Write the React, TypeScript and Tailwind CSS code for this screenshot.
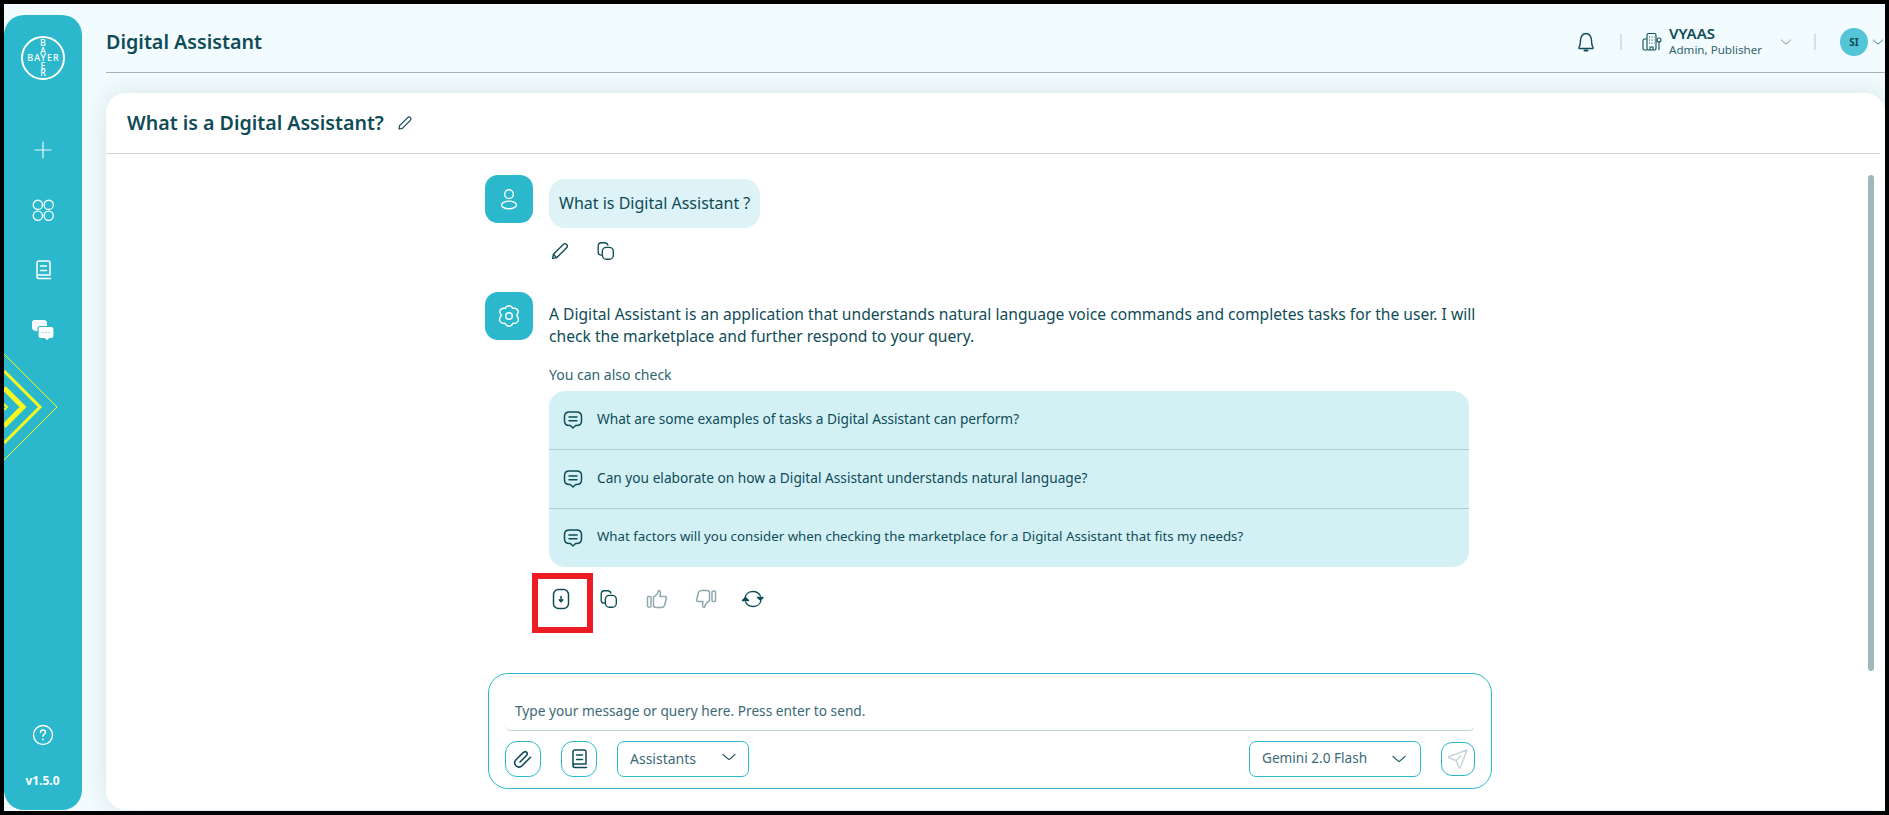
const ink = "#0f4c57";

function Svg({ size = 24, color = ink, sw = 1.5, children }: { size?: number; color?: string; sw?: number; children: React.ReactNode }) {
  return (
    <svg width={size} height={size} viewBox="0 0 24 24" fill="none" stroke={color} strokeWidth={sw} strokeLinecap="round" strokeLinejoin="round" className="shrink-0">
      {children}
    </svg>
  );
}

const CopyIcon = () => (
  <Svg size={22}>
    <path d="M7 16.5C4.8 16.5 3.5 15 3.5 13V6.5C3.5 4.5 5 3 7 3H10.5C12 3 13.5 4 14 5.5" />
    <rect x="8" y="8" width="12" height="13" rx="4.5" />
  </Svg>
);
const BookIcon = ({ color = ink, size = 24 }: { color?: string; size?: number }) => (
  <Svg size={size} color={color}>
    <path d="M6 18.5V5C6 3.9 6.9 3 8 3H17C18.1 3 19 3.9 19 5V17H7.5C6.6 17 6 17.7 6 18.6C6 19.6 6.7 20.5 7.8 20.5H19.5" />
    <path d="M9.5 8H15.5M9.5 12.5H15.5" />
  </Svg>
);
const Chevron = ({ size = 16, color = ink, sw = 1.5 }: { size?: number; color?: string; sw?: number }) => (
  <Svg size={size} color={color} sw={sw}>
    <path d="M4 8.5C7 11.5 10 14 12 15.5C14 14 17 11.5 20 8.5" />
  </Svg>
);
const MsgIcon = () => (
  <Svg size={24}>
    <path d="M8.5 4H15.5C18.5 4 20.5 5.8 20.5 8.5V13C20.5 15.7 18.5 17.5 15.5 17.5H14.6L12 20L9.4 17.5H8.5C5.5 17.5 3.5 15.7 3.5 13V8.5C3.5 5.8 5.5 4 8.5 4Z" />
    <path d="M8 9H16M8 12.8H16" />
  </Svg>
);

function Logo() {
  const letters = "BAYER".split("");
  return (
    <div className="relative w-[44px] h-[44px] rounded-full border-2 border-white text-white font-medium text-[9px] leading-[7.6px]">
      <div className="absolute inset-0 flex items-center justify-center tracking-[1.1px] pl-[1px]">BAYER</div>
      <div className="absolute inset-0 flex flex-col items-center justify-center">
        {letters.map((l, i) => (
          <span key={i} className={i === 2 ? "invisible" : ""}>{l}</span>
        ))}
      </div>
    </div>
  );
}

function Sidebar() {
  return (
    <aside className="relative w-[78px] h-[795px] mt-[11px] bg-[#2bb8cc] rounded-[20px] shrink-0 flex flex-col items-center overflow-hidden text-white">
      <div className="mt-[21px]"><Logo /></div>
      <div className="mt-[58px]">
        <Svg size={24} color="#e8fafc" sw={1.2}><path d="M12 4V20M4 12H20" /></Svg>
      </div>
      <div className="mt-[35px]">
        <Svg size={26} color="#fff" sw={1.2}>
          <rect x="3" y="3" width="8.5" height="8.5" rx="4.2" />
          <rect x="13" y="3" width="8.5" height="8.5" rx="4.2" />
          <rect x="3" y="13" width="8.5" height="8.5" rx="4.2" />
          <rect x="13" y="13" width="8.5" height="8.5" rx="4.2" />
        </Svg>
      </div>
      <div className="mt-[35px]"><BookIcon color="#fff" size={24} /></div>
      <div className="mt-[37px]">
        <svg width="24" height="24" viewBox="0 0 24 24" fill="none">
          <path d="M3 1H13C15 1 16 2.5 16 4V12H6C3 12 1 11 1 8V3.5C1 2 2 1 3 1Z" fill="#fff" />
          <path d="M9 7.5H20.5C22 7.5 23 8.5 23 10V17C23 18.5 22 19.5 20.5 19.5H18.5L16 22L13.5 19.5H9.5C8 19.5 7 18.5 7 17V10C7 8.5 8 7.5 9 7.5Z" fill="#fff" stroke="#2bb8cc" strokeWidth="1.2" />
          <path d="M11.5 13.5H12.5M14.5 13.5H15.5M17.5 13.5H18.5" stroke="#2bb8cc" strokeWidth="1.2" />
        </svg>
      </div>
      <svg className="absolute left-0 top-[339px]" width="54" height="106" viewBox="0 0 54 106" fill="none" stroke="#f8f820">
        <path d="M0 0L53 53L0 106" strokeWidth="1" />
        <path d="M0 17L36 53L0 89" strokeWidth="3" />
        <path d="M0 34L19 53L0 72" strokeWidth="5" />
        <path d="M0 50L3 53L0 56" strokeWidth="2" />
      </svg>
      <div className="mt-auto">
        <Svg size={24} color="#fff" sw={1.4}>
          <circle cx="12" cy="12" r="9.5" />
          <path d="M9.5 9.5C9.5 8 10.6 7 12 7C13.4 7 14.5 8 14.5 9.3C14.5 11 12 11.2 12 13.3" />
          <path d="M12 16.5V16.6" strokeWidth="1.8" />
        </Svg>
      </div>
      <div className="mt-[26px] mb-[21px] text-[12px] leading-[16px] font-bold mr-[1px]">v1.5.0</div>
    </aside>
  );
}

function Header() {
  return (
    <header className="h-[58px] mt-[11px] border-b border-[#aab4b8] flex items-center text-[#0f4c57]">
      <h1 className="text-[19.7px] font-semibold leading-[28px] -mt-[3px]">Digital Assistant</h1>
      <div className="ml-auto flex items-center -mt-[3px]">
        <Svg size={24} sw={1.4}>
          <path d="M5 17.5C6.2 15.5 6.5 14 6.5 10.5C6.5 6.5 8.8 3.5 12 3.5C15.2 3.5 17.5 6.5 17.5 10.5C17.5 14 17.8 15.5 19 17.5C19.2 18 19 18.5 18.5 18.5H5.5C5 18.5 4.8 18 5 17.5Z" />
          <path d="M10.5 20.5H13.5" strokeWidth="2" />
        </Svg>
        <div className="w-[2px] h-[16px] bg-[#dcdfe0] ml-[22px]" />
        <div className="ml-[20px]">
          <svg width="20" height="20" viewBox="0 0 20 20" fill="none" stroke={ink} strokeWidth="1.1">
            <rect x="5" y="1.5" width="9" height="16.5" rx="1.5" />
            <path d="M5 7H2.5C1.7 7 1 7.7 1 8.5V16.5C1 17.3 1.7 18 2.5 18H5" />
            <path d="M7 5H8M9.5 5H10.5M12 5H12.5M7 8H8M9.5 8H10.5M12 8H12.5M7 11H8M9.5 11H10.5M12 11H12.5M8 18V15H11V18" />
            <circle cx="17" cy="8" r="2" />
            <path d="M17 10V18" />
          </svg>
        </div>
        <div className="ml-[7px] w-[110px] -mt-[3px]">
          <div className="text-[15px] leading-[18px] font-semibold">VYAAS</div>
          <div className="text-[11.6px] leading-[16px] text-[#2e6570]">Admin, Publisher</div>
        </div>
        <Chevron size={14} sw={1} />
        <div className="w-[2px] h-[16px] bg-[#dcdfe0] ml-[21px]" />
        <div className="ml-[24px] w-[28px] h-[28px] rounded-full bg-[#54c5d6] flex items-center justify-center text-[10px] font-bold">SI</div>
        <div className="ml-[3px]"><Chevron size={14} sw={1.3} /></div>
      </div>
    </header>
  );
}

function Avatar({ children }: { children: React.ReactNode }) {
  return <div className="w-[48px] h-[48px] rounded-[13px] bg-[#2bb8cc] flex items-center justify-center shrink-0">{children}</div>;
}

const suggestions = [
  { text: "What are some examples of tasks a Digital Assistant can perform?", rowClass: "h-[58px]", textClass: "text-[13.7px]" },
  { text: "Can you elaborate on how a Digital Assistant understands natural language?", rowClass: "h-[59px] border-t border-[#a9cfd4]", textClass: "text-[13.7px]" },
  { text: "What factors will you consider when checking the marketplace for a Digital Assistant that fits my needs?", rowClass: "h-[59px] border-t border-[#a9cfd4]", textClass: "text-[13.3px]" },
];

function Chat() {
  return (
    <div className="relative flex-1 pl-[379px] pt-[21px] text-[#0f4c57]">
      <div className="absolute right-[11px] top-[21px] w-[6px] h-[496px] rounded-full bg-[#9fb8bb]" />
      <div className="flex gap-[16px]">
        <Avatar>
          <Svg size={26} color="#fff" sw={1.3}>
            <circle cx="12" cy="7.5" r="4" />
            <ellipse cx="12" cy="17.5" rx="7" ry="3.5" />
          </Svg>
        </Avatar>
        <div className="mt-[4px] h-[49px] w-[211px] rounded-[16px] bg-[#def3f7] flex items-center pl-[10px] pb-[2px] text-[16px]">What is Digital Assistant ?</div>
      </div>
      <div className="ml-[64px] mt-[11px] flex items-center gap-[24px] h-[24px]">
        <Svg size={22} sw={1.5}>
          <path d="M4 20L4.8 15.5L15.5 4.8C16.5 3.8 18 3.8 19.2 4.8C20.2 5.9 20.2 7.5 19.2 8.5L8.5 19.2Z" />
          <path d="M5 15.8L8.2 19" />
        </Svg>
        <CopyIcon />
      </div>
      <div className="flex gap-[16px] mt-[29px]">
        <Avatar>
          <Svg size={26} color="#fff" sw={1.3}>
            <circle cx="12" cy="12" r="3" />
            <path d="M12 2.5C14 2.5 15 4 15.5 5C17 4.5 19.5 5 20.3 7C21 9 19.7 10.5 19 11.5C19.7 12.5 21.3 14 20.5 16.5C19.7 18.7 17 19 15.7 18.7C15 20 14 21.5 12 21.5C10 21.5 9 20 8.3 18.7C7 19 4.3 18.7 3.5 16.5C2.7 14 4.3 12.5 5 11.5C4.3 10.5 3 9 3.7 7C4.5 5 7 4.5 8.5 5C9 4 10 2.5 12 2.5Z" />
          </Svg>
        </Avatar>
        <div className="w-[930px] text-[15.64px] leading-[22px] pt-[11px]">
          A Digital Assistant is an application that understands natural language voice commands and completes tasks for the user. I will check the marketplace and further respond to your query.
        </div>
      </div>
      <div className="ml-[64px]">
        <div className="mt-[18px] text-[14px] leading-[20px] text-[#2e6570]">You can also check</div>
        <div className="mt-[6px] w-[920px] rounded-[16px] bg-[#d3f1f5]">
          {suggestions.map((s) => (
            <div key={s.text} className={`flex items-center gap-[12px] pl-[12px] ${s.rowClass}`}>
              <MsgIcon />
              <span className={`${s.textClass} pb-[2px]`}>{s.text}</span>
            </div>
          ))}
        </div>
        <div className="flex items-center h-[24px] mt-[20px] gap-[25px]">
          <div className="relative w-[24px] h-[24px]">
            <div className="absolute left-[-17px] top-[-14px] w-[61px] h-[60px] border-[6px] border-[#ed1c24]" />
            <Svg size={24} sw={1.5}>
              <rect x="4.5" y="2.5" width="15" height="19" rx="5" />
              <path d="M12 9.5V14.5M10.2 12.8L12 14.8L13.8 12.8" strokeWidth="1.5" />
            </Svg>
          </div>
          <CopyIcon />
          <Svg size={24} color="#8fa9ad" sw={1.5}>
            <rect x="2.5" y="9.5" width="3.5" height="10.5" rx="1" />
            <path d="M8.5 10C10.5 9 13 6.5 13.5 3.5C15.5 3.5 16 5.5 15 9.5H20C21.5 9.5 21.8 11 21.2 12L19.5 18.5C19 20 18 20.5 16.5 20.5H11C9.5 20.5 8.5 19.5 8.5 18Z" />
          </Svg>
          <Svg size={24} color="#8fa9ad" sw={1.5}>
            <rect x="18" y="4" width="3.5" height="10.5" rx="1" />
            <path d="M15.5 14C13.5 15 11 17.5 10.5 20.5C8.5 20.5 8 18.5 9 14.5H4C2.5 14.5 2.2 13 2.8 12L4.5 5.5C5 4 6 3.5 7.5 3.5H13C14.5 3.5 15.5 4.5 15.5 6Z" />
          </Svg>
          <div className="-ml-[2px]">
            <Svg size={24} sw={1.4}>
              <path d="M4 11C4.5 7 8 4.5 12 4.5C15 4.5 18 6.2 19.5 9" />
              <path d="M20 13C19.5 17 16 19.5 12 19.5C9 19.5 6 17.8 4.5 15" />
              <path d="M16.5 10.5H22L19.5 13Z" fill={ink} />
              <path d="M1.5 13.5H7.5L4.5 10.5Z" fill={ink} />
            </Svg>
          </div>
        </div>
      </div>
    </div>
  );
}

function Composer() {
  const btn = "w-[36px] h-[36px] rounded-[12px] border border-[#2bb8cc] flex items-center justify-center";
  const sel = "h-[36px] rounded-[7px] border border-[#2bb8cc] flex items-center justify-between text-[#3c6a78]";
  return (
    <div className="absolute left-[382px] bottom-[21px] w-[1004px] h-[116px] rounded-[20px] border border-[#2bb8cc] px-[16px] bg-white">
      <div className="h-[57px] border-b border-[#bcd6d8] rounded-b-[6px] pl-[10px] pt-[27px] text-[13.7px] leading-[20px] text-[#3c6a78]">
        Type your message or query here. Press enter to send.
      </div>
      <div className="flex items-center mt-[10px]">
        <div className={btn}>
          <Svg size={24} sw={1.6}>
            <path d="M9 15L15.5 8.5C16.5 7.5 16.5 6 15.7 5.3C14.8 4.4 13.3 4.5 12.4 5.4L5 12.8C3.3 14.5 3.3 17 5 18.8C6.7 20.5 9.3 20.5 11 18.8L19.5 10.3" />
          </Svg>
        </div>
        <div className={`${btn} ml-[20px]`}><BookIcon /></div>
        <div className={`${sel} ml-[20px] w-[132px] pl-[12px] pr-[10px] text-[14px]`}>
          <span className="pb-[2px]">Assistants</span>
          <div className="-mt-[4px]"><Chevron size={18} /></div>
        </div>
        <div className={`${sel} ml-auto w-[172px] pl-[12px] pr-[12px] text-[13.6px]`}>
          <span className="pb-[2px]">Gemini 2.0 Flash</span>
          <Chevron size={18} />
        </div>
        <div className="w-[34px] h-[34px] rounded-[11px] border border-[#2bb8cc] flex items-center justify-center ml-[20px]">
          <Svg size={24} color="#c9d6d8" sw={1.5}>
            <path d="M21 3L3 9.5C2.5 9.8 2.5 10.5 3 10.7L10 13.5L13 20.8C13.2 21.3 14 21.3 14.2 20.8Z" />
            <path d="M10 13.5L15 9" />
          </Svg>
        </div>
      </div>
    </div>
  );
}

export default function App() {
  return (
    <div className="w-[1889px] h-[815px] bg-black p-[4px] overflow-hidden" style={{ fontFamily: '"Noto Sans", sans-serif' }}>
      <div className="w-full h-[807px] bg-[#f2fbfd] flex">
        <Sidebar />
        <div className="flex-1 min-w-0 pl-[24px] flex flex-col">
          <Header />
          <main className="relative mt-[20px] h-[717px] bg-white rounded-tl-[20px] rounded-tr-[20px] rounded-bl-[20px] flex flex-col shadow-[0_0_24px_rgba(15,76,87,0.12)]">
            <div className="h-[61px] mr-[5px] border-b border-[#cfd2d3] flex items-center pl-[21px] gap-[12px]">
              <h2 className="text-[19.6px] font-semibold text-[#0f4c57]">What is a Digital Assistant?</h2>
              <Svg size={18} sw={1.6}>
                <path d="M4 20L4.8 15.5L15.5 4.8C16.5 3.8 18 3.8 19.2 4.8C20.2 5.9 20.2 7.5 19.2 8.5L8.5 19.2Z" />
              </Svg>
            </div>
            <Chat />
            <Composer />
          </main>
        </div>
      </div>
    </div>
  );
}
